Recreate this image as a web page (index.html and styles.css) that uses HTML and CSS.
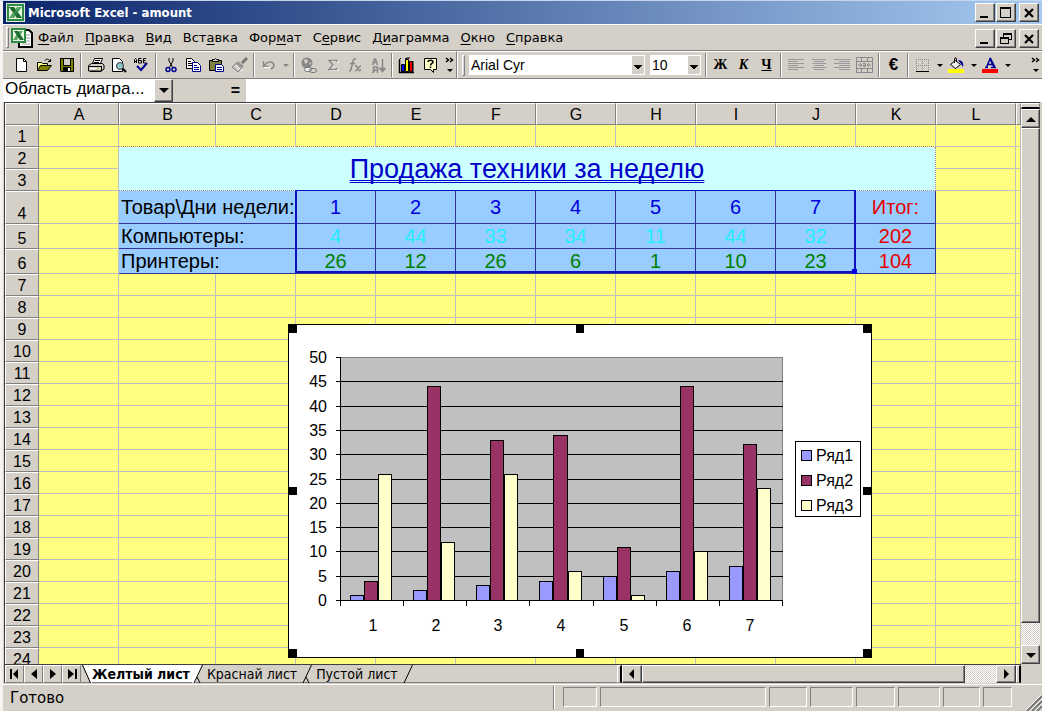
FILE: index.html
```
<!DOCTYPE html>
<html lang="ru">
<head>
<meta charset="utf-8">
<title>Microsoft Excel - amount</title>
<link rel="stylesheet" href="styles.css">
</head>
<body>
<div class="window">
<header class="titlebar">
  <svg class="app-icon" width="19" height="19" viewBox="0 0 19 19"><rect width="19" height="19" fill="#d9ecd6"/><rect x="1" y="1" width="17" height="17" fill="#2f8a44"/><rect x="3" y="3" width="13" height="13" fill="#e8f5e4"/><path d="M3 4h5l8 11h-5z" fill="#1c6b30"/><path d="M11 4h5L8 15H3z" fill="#55a862"/><path d="M3 4h5l8 11h-5z" fill="#1c6b30" opacity=".6"/></svg>
  <h1 class="title">Microsoft Excel - amount</h1>
  <div class="winbtns">
    <button class="wb" aria-label="Свернуть"><svg width="16" height="14"><path d="M3 10h8v2H3z"/></svg></button>
    <button class="wb" aria-label="Развернуть"><svg width="16" height="14"><path d="M2 1h11v11H2zM3 3v8h9V3z" fill-rule="evenodd"/></svg></button>
    <button class="wb wb-close" aria-label="Закрыть"><svg width="16" height="14"><path d="M4 3l8 8M12 3l-8 8" stroke="#000" stroke-width="2.200"/></svg></button>
  </div>
</header>

<nav class="menubar" aria-label="Меню">
  <span class="grip"></span>
  <svg class="doc-icon" width="24" height="22" viewBox="0 0 24 22"><path d="M9 3h10l3 3v14H9z" fill="#fff" stroke="#000" stroke-width="2"/><path d="M13 8h7M13 11h7M13 14h7M12 17h8" stroke="#999"/><rect x="1" y="1" width="15" height="15" fill="#2f8a44"/><rect x="3" y="3" width="11" height="11" fill="#e8f5e4"/><path d="M9 4h4l-6 9H3z" fill="#55a862"/><path d="M4 4h4l6 9h-4z" fill="#1c6b30"/></svg>
  <button class="menu"><u>Ф</u>айл</button>
  <button class="menu"><u>П</u>равка</button>
  <button class="menu"><u>В</u>ид</button>
  <button class="menu">Вст<u>а</u>вка</button>
  <button class="menu">Фор<u>м</u>ат</button>
  <button class="menu">С<u>е</u>рвис</button>
  <button class="menu">Д<u>и</u>аграмма</button>
  <button class="menu"><u>О</u>кно</button>
  <button class="menu"><u>С</u>правка</button>
  <div class="winbtns">
    <button class="wb" aria-label="Свернуть книгу"><svg width="16" height="14"><path d="M3 10h8v2H3z"/></svg></button>
    <button class="wb" aria-label="Восстановить книгу"><svg width="16" height="14"><path d="M5 1h9v7h-3V7h2V3H6v2H5zM2 5h9v7H2zM3 7v4h7V7z" fill-rule="evenodd"/></svg></button>
    <button class="wb wb-close" aria-label="Закрыть книгу"><svg width="16" height="14"><path d="M4 3l8 8M12 3l-8 8" stroke="#000" stroke-width="2.200"/></svg></button>
  </div>
</nav>

<div class="toolbars">
  <div class="bar bar-std">
    <button class="tb" aria-label="Создать"><svg width="16" height="16"><path d="M3.500 1.500h7l3 3v10h-10z" fill="#fff" stroke="#000"/><path d="M10.500 1.500v3h3" fill="none" stroke="#000"/></svg></button>
    <button class="tb" aria-label="Открыть"><svg width="16" height="16"><path d="M1.500 13.500v-8h4l1 1h5v2" fill="#ffff80" stroke="#000"/><path d="M1.500 13.500l3-5h11l-4 5z" fill="#808000" stroke="#000"/><path d="M9 3.500c1-2 4-2 5 1M12 4.500h3M14.500 2v3" fill="none" stroke="#000"/></svg></button>
    <button class="tb" aria-label="Сохранить"><svg width="16" height="16"><path d="M1 1h14v14H2l-1-1z"/><path d="M2 2h2v7h8V2h2v12H2z" fill="#808000"/><path d="M5 2h6v6H5z" fill="#d4d0c8"/><path d="M4 10h8v4H4z"/><path d="M9 11h2v3H9z" fill="#fff"/></svg></button>
    <span class="sep"></span>
    <button class="tb" aria-label="Печать"><svg width="18" height="16"><path d="M5.500 6.500l2-5h8l-2 5" fill="#fff" stroke="#000"/><path d="M8 3.500h5M7 5.500h5" stroke="#000"/><path d="M1.500 8.500l3-2h11l1.500 1.500v4l-2.500 2h-13z" fill="#d4d0c8" stroke="#000"/><path d="M2 9.500h13M14.500 9v5M3 14.500h11" stroke="#000"/><path d="M3 11.500h10" stroke="#fff"/><path d="M10 11h2v1h-2z" fill="#cc0"/></svg></button>
    <button class="tb" aria-label="Предварительный просмотр"><svg width="17" height="16"><path d="M2.500 14.500v-13h7l3 3v10z" fill="#fff" stroke="#000"/><circle cx="10" cy="9" r="3.500" fill="#8ec8c8" stroke="#333"/><path d="M12.500 11.500l3.500 3.500" stroke="#000" stroke-width="2"/></svg></button>
    <button class="tb" aria-label="Орфография"><svg width="18" height="16"><path d="M1.500 6V2.500l1-1 1 1V6M1.500 4.500h2M8.500 1.500h-3V6h3V3.500h-3M13 1.500h-2.500V6H13M10 3.500h2.500" fill="none" stroke="#000"/><path d="M4 9l4 4 6-7" fill="none" stroke="#000090" stroke-width="2"/></svg></button>
    <span class="sep"></span>
    <button class="tb" aria-label="Вырезать"><svg width="16" height="16"><path d="M6 1v3l4 7M10 1v3L6 11" fill="none" stroke="#000"/><circle cx="5" cy="12.500" r="2" fill="none" stroke="#000090" stroke-width="1.500"/><circle cx="11" cy="12.500" r="2" fill="none" stroke="#000090" stroke-width="1.500"/></svg></button>
    <button class="tb" aria-label="Копировать"><svg width="17" height="16"><path d="M1.500 1.500h5l3 3v7h-8z" fill="#fff" stroke="#000"/><path d="M3 4.500h3M3 6.500h4M3 8.500h4" stroke="#000"/><path d="M7.500 5.500h5l3 3v6h-8z" fill="#fff" stroke="#000090"/><path d="M9 8.500h3M9 10.500h5M9 12.500h5" stroke="#000090"/></svg></button>
    <button class="tb" aria-label="Вставить"><svg width="17" height="16"><path d="M1.500 3.500h12v10h-12z" fill="#808040" stroke="#000"/><path d="M4.500 4.500v-2h2l1-1 1 1h2v2z" fill="#d4d0c8" stroke="#000"/><path d="M7.500 7.500h6l2 2v5h-8z" fill="#fff" stroke="#000090"/><path d="M9 10.500h5M9 12.500h5" stroke="#000090"/></svg></button>
    <button class="tb" aria-label="Формат по образцу"><svg width="17" height="16"><path d="M16 1l-5 5" stroke="#777" stroke-width="3"/><path d="M7 4l6 5-2 2-6-5z" fill="#999"/><path d="M5 6l6 5-4 4-6-5z" fill="#b8b5ae" stroke="#888"/><path d="M3 9l5 4M5 8l4 4M9 14l3-2" stroke="#fff"/></svg></button>
    <span class="sep"></span>
    <button class="tb" aria-label="Отменить"><svg width="16" height="16"><path d="M2.500 4v6M2 9.500h6M3 9c3-5 9-5 10-1 0 2-1 3-3 4" fill="none" stroke="#888" stroke-width="1.500"/><path d="M3 10.500h6" stroke="#fff"/></svg></button>
    <button class="dd dd-off" aria-label="Список отмены"></button>
    <span class="sep"></span>
    <button class="tb" aria-label="Гиперссылка"><svg width="17" height="17"><circle cx="7" cy="6" r="5.500" fill="#888"/><path d="M4 3l3-1 1 3-3 2zM9 6l2-1v3z" fill="#d4d0c8"/><rect x="4.500" y="10.500" width="7" height="4" rx="2" fill="#eee" stroke="#777"/><rect x="9.500" y="11.500" width="7" height="4" rx="2" fill="none" stroke="#777"/></svg></button>
    <button class="tb" aria-label="Автосумма"><svg width="16" height="16"><path d="M13 5V3.500H5L9 8 5 12.500h8V11" fill="none" stroke="#fff" transform="translate(1 1)"/><path d="M12.500 5V3.500H5L9 8 5 12.500h7.500V11" fill="none" stroke="#888" stroke-width="1.500"/></svg></button>
    <button class="tb" aria-label="Вставка функции"><svg width="16" height="16"><path d="M9 2c-2-1-3 1-3 3l-2 7c0 2-1 2-2 2M3 6.500h5M8 9c2-1 2 1 3 3s1 2 3 1M14 9c-2 0-4 5-6 5" fill="none" stroke="#888" stroke-width="1.500"/></svg></button>
    <button class="tb" aria-label="Сортировка"><svg width="16" height="17"><path d="M2.500 8l2-6h1l2 6M3 5.500h4M7.500 16v-6h-4v3h4M5 13l-2.500 3M12.500 2v12M10 11.500l2.500 3 2.500-3z" fill="none" stroke="#888" stroke-width="1.500"/></svg></button>
    <span class="sep"></span>
    <button class="tb" aria-label="Мастер диаграмм"><svg width="18" height="17"><path d="M1.500 3v12.500H16" fill="none" stroke="#000" stroke-width="1.500"/><path d="M3.500 7.500h3v7h-3z" fill="#00f" stroke="#000"/><path d="M7.500 2.500h3v12h-3z" fill="#ff0" stroke="#000"/><path d="M11.500 4.500h3v10h-3z" fill="#e00" stroke="#000"/><path d="M1 3l2-2M7 2l2-1h3M15 4v11" stroke="#000"/></svg></button>
    <button class="tb" aria-label="Справка"><svg width="16" height="17"><path d="M2.500 1.500h12v11h-3v3l-3-3h-6z" fill="#ffffc8" stroke="#000"/><path d="M6 5c0-2.500 5-2.500 5 0 0 1.500-2.500 1.500-2.500 3.500M8.500 9.500v1.500" fill="none" stroke="#000" stroke-width="1.500"/></svg></button>
    <button class="more" aria-label="Другие кнопки"><svg width="10" height="16"><path d="M1 1l2.500 2L1 5M5 1l2.500 2L5 5" fill="none" stroke="#000" stroke-width="1.500"/><path d="M2 12h6l-3 3z"/></svg></button>
  </div>
  <div class="bar bar-fmt">
    <span class="grip grip-tall"></span>
    <span class="combo combo-font"><select aria-label="Шрифт"><option>Arial Cyr</option></select></span>
    <span class="combo combo-size"><select aria-label="Размер"><option>10</option></select></span>
    <span class="sep"></span>
    <button class="tb fmt-b">Ж</button>
    <button class="tb fmt-i">К</button>
    <button class="tb fmt-u">Ч</button>
    <span class="sep"></span>
    <button class="tb" aria-label="По левому краю"><svg width="16" height="16"><path d="M0 2.500h16M0 4.500h10M0 6.500h16M0 8.500h10M0 10.500h16M0 12.500h10" stroke="#999"/></svg></button>
    <button class="tb" aria-label="По центру"><svg width="16" height="16"><path d="M1 2.500h14M3 4.500h10M1 6.500h14M3 8.500h10M1 10.500h14M3 12.500h10" stroke="#999"/></svg></button>
    <button class="tb" aria-label="По правому краю"><svg width="16" height="16"><path d="M0 2.500h16M5 4.500h11M0 6.500h16M5 8.500h11M0 10.500h16M5 12.500h11" stroke="#999"/></svg></button>
    <button class="tb" aria-label="Объединить ячейки"><svg width="17" height="17"><path d="M.5.500h16v15H.5zM0 4.500h16M0 11.500h16M5.500 0v4M11.500 0v4M5.500 12v4M11.500 12v4" fill="none" stroke="#888"/><path d="M2 8h3M12 8h3M4 6l2 2-2 2M13 6l-2 2 2 2" fill="none" stroke="#888"/><path d="M7 6.500h2.500v3H7.500v-1.500h2" fill="none" stroke="#888"/></svg></button>
    <span class="sep"></span>
    <button class="tb fmt-e">€</button>
    <span class="sep"></span>
    <button class="tb" aria-label="Границы"><svg width="15" height="15"><path d="M1 1.500h13M1 7.500h13M1.500 1v12M7.500 1v12M13.500 1v12" stroke="#888" stroke-dasharray="1 1"/><path d="M1 13.500h13" stroke="#000"/></svg></button>
    <button class="dd" aria-label="Вид границ"></button>
    <button class="tb" aria-label="Цвет заливки"><svg width="17" height="17"><path d="M7.500 3.500l5 4-5 4-5-4z" fill="#eee" stroke="#000"/><path d="M6.500 6V2c0-1.500 2-1.500 2 0v3" fill="none" stroke="#000"/><path d="M10 3c5 0 6 4 5 7l-2-3z" fill="#000090"/><path d="M0 12h16v4H0z" fill="#ff0"/></svg></button>
    <button class="dd" aria-label="Выбор цвета заливки"></button>
    <button class="tb" aria-label="Цвет шрифта"><svg width="17" height="17"><path d="M3 10.500h3M9 10.500h5M4.500 10L8 2l4 8M6 7.500h5" fill="none" stroke="#000090" stroke-width="1.500"/><path d="M8 1l4.500 9" stroke="#000090" stroke-width="2"/><path d="M0 12h16v4H0z" fill="#f00"/></svg></button>
    <button class="dd" aria-label="Выбор цвета шрифта"></button>
    <button class="more more-end" aria-label="Другие кнопки"><svg width="10" height="16"><path d="M1 1l2.500 2L1 5M5 1l2.500 2L5 5" fill="none" stroke="#000" stroke-width="1.500"/><path d="M2 12h6l-3 3z"/></svg></button>
  </div>
</div>

<div class="formula">
  <input class="namebox" type="text" aria-label="Имя" value="Область диагра...">
  <button class="name-dd" aria-label="Список имён"></button>
  <button class="eq" aria-label="Изменить формулу">=</button>
  <input class="fx" type="text" aria-label="Строка формул">
</div>

<main class="work">
  <div class="pane">
    <div class="grid">
    <table class="sheet">
      <colgroup><col class="c-head"><col class="c"><col class="c-b"><col class="c"><col class="c"><col class="c"><col class="c"><col class="c"><col class="c"><col class="c"><col class="c"><col class="c"><col class="c"><col></colgroup>
      <thead>
      <tr><th></th><th>A</th><th>B</th><th>C</th><th>D</th><th>E</th><th>F</th><th>G</th><th>H</th><th>I</th><th>J</th><th>K</th><th>L</th><th></th></tr>
      </thead>
      <tbody>
      <tr class="above"><th>1</th><td><td><td><td><td><td><td><td><td><td><td><td><td></tr>
      <tr><th>2</th><td><td class="caption" colspan="10" rowspan="2">Продажа техники за неделю<td><td></tr>
      <tr><th>3</th><td><td><td></tr>
      <tr class="data tall"><th>4</th><td><td class="name" colspan="2">Товар\Дни недели:<td class="day">1<td class="day">2<td class="day">3<td class="day">4<td class="day">5<td class="day">6<td class="day">7<td class="sum">Итог:<td><td></tr>
      <tr class="data mid"><th>5</th><td><td class="name" colspan="2">Компьютеры:<td class="pc">4<td class="pc">44<td class="pc">33<td class="pc">34<td class="pc">11<td class="pc">44<td class="pc">32<td class="sum">202<td><td></tr>
      <tr class="data mid"><th>6</th><td><td class="name" colspan="2">Принтеры:<td class="prn">26<td class="prn">12<td class="prn">26<td class="prn">6<td class="prn">1<td class="prn">10<td class="prn">23<td class="sum">104<td><td></tr>
      <tr><th>7</th><td><td><td><td><td><td><td><td><td><td><td><td><td></tr>
      <tr><th>8</th><td><td><td><td><td><td><td><td><td><td><td><td><td></tr>
      <tr><th>9</th><td><td><td><td><td><td><td><td><td><td><td><td><td></tr>
      <tr><th>10</th><td><td><td><td><td><td><td><td><td><td><td><td><td></tr>
      <tr><th>11</th><td><td><td><td><td><td><td><td><td><td><td><td><td></tr>
      <tr><th>12</th><td><td><td><td><td><td><td><td><td><td><td><td><td></tr>
      <tr><th>13</th><td><td><td><td><td><td><td><td><td><td><td><td><td></tr>
      <tr><th>14</th><td><td><td><td><td><td><td><td><td><td><td><td><td></tr>
      <tr><th>15</th><td><td><td><td><td><td><td><td><td><td><td><td><td></tr>
      <tr><th>16</th><td><td><td><td><td><td><td><td><td><td><td><td><td></tr>
      <tr><th>17</th><td><td><td><td><td><td><td><td><td><td><td><td><td></tr>
      <tr><th>18</th><td><td><td><td><td><td><td><td><td><td><td><td><td></tr>
      <tr><th>19</th><td><td><td><td><td><td><td><td><td><td><td><td><td></tr>
      <tr><th>20</th><td><td><td><td><td><td><td><td><td><td><td><td><td></tr>
      <tr><th>21</th><td><td><td><td><td><td><td><td><td><td><td><td><td></tr>
      <tr><th>22</th><td><td><td><td><td><td><td><td><td><td><td><td><td></tr>
      <tr><th>23</th><td><td><td><td><td><td><td><td><td><td><td><td><td></tr>
      <tr><th>24</th><td><td><td><td><td><td><td><td><td><td><td><td><td></tr>
      </tbody>
    </table>
    <div class="range"></div>
    <svg class="chart" viewBox="288 324 584 334" role="img" aria-label="Диаграмма">
      <g transform="translate(.5 .5)" fill="none" stroke="#000" shape-rendering="crispEdges">
        <rect x="288" y="324" width="583" height="333" fill="#fff"/>
        <rect x="340" y="357" width="442" height="243" fill="#c0c0c0" stroke="#808080"/>
        <path d="M340 381h442M340 406h442M340 430h442M340 454h442M340 479h442M340 503h442M340 527h442M340 551h442M340 576h442"/>
        <path d="M340 357v248M335 600h447M335 357h5M335 381h5M335 406h5M335 430h5M335 454h5M335 479h5M335 503h5M335 527h5M335 551h5M335 576h5"/>
        <path d="M403 600v5M466 600v5M529 600v5M593 600v5M656 600v5M719 600v5M782 600v5"/>
        <g fill="#9999ff">
          <rect x="350" y="595" width="13" height="5"/><rect x="413" y="590" width="13" height="10"/><rect x="476" y="585" width="13" height="15"/><rect x="539" y="581" width="13" height="19"/><rect x="603" y="576" width="13" height="24"/><rect x="666" y="571" width="13" height="29"/><rect x="729" y="566" width="13" height="34"/>
        </g>
        <g fill="#993366">
          <rect x="364" y="581" width="13" height="19"/><rect x="427" y="386" width="13" height="214"/><rect x="490" y="440" width="13" height="160"/><rect x="553" y="435" width="14" height="165"/><rect x="617" y="547" width="13" height="53"/><rect x="680" y="386" width="13" height="214"/><rect x="743" y="444" width="13" height="156"/>
        </g>
        <g fill="#ffffcc">
          <rect x="378" y="474" width="13" height="126"/><rect x="441" y="542" width="13" height="58"/><rect x="504" y="474" width="13" height="126"/><rect x="568" y="571" width="13" height="29"/><rect x="631" y="595" width="13" height="5"/><rect x="694" y="551" width="13" height="49"/><rect x="757" y="488" width="13" height="112"/>
        </g>
        <rect x="795" y="441" width="65" height="75" fill="#fff"/>
        <rect x="801" y="450" width="10" height="10" fill="#9999ff"/>
        <rect x="801" y="475" width="10" height="10" fill="#993366"/>
        <rect x="801" y="500" width="10" height="10" fill="#ffffcc"/>
      </g>
      <g class="axis-y"><text x="327" y="363">50</text><text x="327" y="387">45</text><text x="327" y="412">40</text><text x="327" y="436">35</text><text x="327" y="460">30</text><text x="327" y="485">25</text><text x="327" y="509">20</text><text x="327" y="533">15</text><text x="327" y="557">10</text><text x="327" y="582">5</text><text x="327" y="606">0</text></g>
      <g class="axis-x"><text x="373" y="631">1</text><text x="436" y="631">2</text><text x="498" y="631">3</text><text x="561" y="631">4</text><text x="624" y="631">5</text><text x="687" y="631">6</text><text x="750" y="631">7</text></g>
      <text x="816" y="461">Ряд1</text><text x="816" y="486">Ряд2</text><text x="816" y="511">Ряд3</text>
      <path d="M288 324h9v9h-9zM576 324h8v9h-8zM863 324h9v9h-9zM288 487h9v8h-9zM863 487h9v8h-9zM288 649h9v9h-9zM576 649h8v9h-8zM863 649h9v9h-9z"/>
    </svg>
    </div>
    <div class="foot">
      <div class="tabnav">
        <button class="nv" aria-label="Первый лист"><svg width="12" height="12"><path d="M1 1h2v10H1zM9 1v10L4 6z"/></svg></button>
        <button class="nv" aria-label="Предыдущий лист"><svg width="12" height="12"><path d="M9 1v10L3 6z"/></svg></button>
        <button class="nv" aria-label="Следующий лист"><svg width="12" height="12"><path d="M3 1v10l6-5z"/></svg></button>
        <button class="nv" aria-label="Последний лист"><svg width="12" height="12"><path d="M2 1v10l6-5zM9 1h2v10H9z"/></svg></button>
      </div>
      <div class="tabs">
        <svg width="11" height="18"><path d="M2 0h9v18H10z" fill="#fff"/><path d="M1.500 0l8 18" stroke="#000"/></svg>
        <button class="tab tab-on">Желтый лист</button>
        <svg width="11" height="18"><path d="M0 0h10L3 18H0z" fill="#fff"/><path d="M10.500 0L2 18M5 12l3 6" stroke="#000"/></svg>
        <button class="tab">Краснай лист</button>
        <svg width="11" height="18"><path d="M10.500 0L2 18M5 12l3 6" stroke="#000"/></svg>
        <button class="tab">Пустой лист</button>
        <svg width="11" height="18"><path d="M10.500 0L2 18" stroke="#000"/></svg>
      </div>
      <div class="hscroll">
        <span class="split-v"></span>
        <button class="sb" aria-label="Влево"><svg width="12" height="12"><path d="M8 1v10L3 6z"/></svg></button>
        <span class="thumb"></span>
        <span class="track-h"></span>
        <button class="sb" aria-label="Вправо"><svg width="12" height="12"><path d="M4 1v10l5-5z"/></svg></button>
        <span class="split-v"></span>
      </div>
    </div>
  </div>
  <div class="vscroll">
    <span class="split-h"></span>
    <button class="sb sb-v" aria-label="Вверх"><svg width="12" height="12"><path d="M1 9h10L6 4z"/></svg></button>
    <span class="thumb"></span>
    <span class="track-v"></span>
    <button class="sb sb-v" aria-label="Вниз"><svg width="12" height="12"><path d="M1 4h10L6 9z"/></svg></button>
    <span class="corner"></span>
  </div>
</main>

<footer class="status">
  <span class="ready">Готово</span>
  <span class="cells"><i class="p p1"></i><i class="p p2"></i><i class="p p3"></i><i class="p p4"></i><i class="p p5"></i><i class="p p6"></i><i class="p p7"></i><i class="p p8"></i></span>
  <svg class="resize" width="16" height="16"><path d="M1 16L16 1M6 16L16 6M11 16l5-5" stroke="#777" stroke-width="2"/><path d="M0 15L15 0M5 15L16 4M10 15l6-6" stroke="#fff"/></svg>
</footer>
</div>
</body>
</html>
```
FILE: styles.css
```
* { box-sizing: border-box; }
body { margin: 0; background: #d4d0c8; font-family: "Liberation Sans", Arial, sans-serif; color: #000; }
button { border: 0; margin: 0; padding: 0; background: none; color: inherit; font: inherit; }
svg { display: block; }

.window { display: flex; flex-direction: column; height: 100vh; border-left: 3px solid #f4f3f0; border-top: 1px solid #c4d6ec; overflow: hidden; background: #d4d0c8; }

.titlebar { display: flex; align-items: center; height: 23px; padding: 0 3px; background: linear-gradient(90deg, #0a246a, #a6caf0); flex: none; }
.title { margin: 0; padding-left: 3px; color: #fff; font: bold 13px/20px "DejaVu Sans Condensed", "DejaVu Sans", sans-serif; }
.winbtns { display: flex; margin-left: auto; }
.wb { width: 20px; height: 19px; display: flex; align-items: center; justify-content: center; background: #d4d0c8; border: 1px solid; border-color: #fff #404040 #404040 #fff; box-shadow: inset -1px -1px #808080; }
.wb + .wb { margin-left: 1px; }
.wb + .wb-close { margin-left: 3px; }

.menubar { display: flex; align-items: center; gap: 1px; height: 27px; padding: 0 3px; border-top: 1px solid #fff; border-bottom: 1px solid #808080; flex: none; }
.menubar .winbtns { align-self: flex-end; padding-bottom: 2px; }
.grip { width: 3px; height: 21px; border: 1px solid; border-color: #fff #808080 #808080 #fff; }
.doc-icon { margin-right: -2px; }
.menu { padding: 0 5px; font: 13px/20px "DejaVu Sans", sans-serif; }
.menu u { text-underline-offset: 2px; }

.toolbars { display: flex; height: 28px; flex: none; }
.bar { display: flex; align-items: center; border-top: 1px solid #fff; border-bottom: 1px solid #808080; }
.bar-std { padding-left: 6px; border-right: 1px solid #808080; }
.bar-fmt { flex: 1; padding-left: 4px; border-left: 1px solid #fff; }
.tb { width: 23px; height: 22px; display: flex; align-items: center; justify-content: center; flex: none; }
.sep { width: 2px; height: 24px; margin: 0 2px; background: #808080; border-right: 1px solid #fff; flex: none; }
.dd { width: 11px; height: 22px; flex: none; display: flex; align-items: center; justify-content: center; }
.dd::before { content: ""; border: 3px solid transparent; border-top-color: #000; border-bottom: 0; }
.dd-off::before { border-top-color: #888; }
.more { width: 15px; padding-left: 4px; }
.more-end { margin-left: auto; margin-right: 2px; width: 13px; }
.grip-tall { margin-right: 4px; }
.combo { position: relative; height: 20px; background: #fff; display: flex; }
.combo::after { content: ""; position: absolute; right: 1px; top: 1px; width: 12px; height: 18px; pointer-events: none; background: linear-gradient(#000, #000) 50% 50% / 8px 1px no-repeat, linear-gradient(#000, #000) 50% 56% / 6px 1px no-repeat, linear-gradient(#000, #000) 50% 62% / 4px 1px no-repeat, linear-gradient(#000, #000) 50% 68% / 2px 1px no-repeat, #d4d0c8; }
.combo select { appearance: none; width: 100%; border: 0; padding: 0 14px 0 2px; background: none; font: 14px/18px "Liberation Sans", Arial, sans-serif; color: #000; }
.combo-font { width: 176px; margin-right: 5px; }
.combo-size { width: 51px; margin-right: 2px; }
.fmt-b, .fmt-i, .fmt-u { font: bold 14px/20px "Liberation Serif", serif; }
.fmt-i { font-style: italic; }
.fmt-u { text-decoration: underline; }
.fmt-e { font: bold 17px/20px "Liberation Sans", Arial, sans-serif; }

.formula { display: flex; height: 23px; flex: none; }
.formula input { border: 0; margin: 0; padding: 0 2px; background: #fff; font: 17px/20px "Liberation Sans", Arial, sans-serif; color: #000; outline: 0; }
.formula .namebox { width: 151px; padding: 0 0 3px 2px; }
.name-dd { width: 19px; border: 1px solid; border-color: #fff #404040 #404040 #fff; box-shadow: inset -1px -1px #808080; background: #d4d0c8; display: flex; align-items: center; justify-content: center; }
.name-dd::before { content: ""; border: 5px solid transparent; border-top-color: #000; border-bottom: 0; }
.eq { width: 73px; padding-right: 6px; text-align: right; font-weight: bold; font-size: 16px; line-height: 20px; }
.formula .fx { flex: 1; }

.work { flex: 1; min-height: 0; display: flex; margin: 0 2px 0 1px; border-left: 1px solid #404040; }
.pane { flex: 1; min-width: 0; display: flex; flex-direction: column; }
.grid { position: relative; flex: 1; min-height: 0; overflow: hidden; background: #ffff80; border-top: 1px solid #404040; }
.sheet { width: 100%; table-layout: fixed; border-collapse: separate; border-spacing: 0; }
.c-head { width: 34px; }
.c { width: 80px; }
.c-b { width: 97px; }
.sheet tr { height: 22px; }
.sheet th { padding: 0; height: 22px; background: #d4d0c8; border: 1px solid; border-color: #fff #808080 #808080 #fff; font-weight: normal; font-size: 16px; line-height: 18px; vertical-align: bottom; }
.sheet td { padding: 0; border: 0 solid #c0c0c0; border-right-width: 1px; border-bottom-width: 1px; font-size: 20px; line-height: 24px; text-align: center; }
.above td:nth-child(n+3):nth-child(-n+12) { border-bottom: 1px dotted #c08070; }
.sheet .caption { background: #ccffff; color: #0000c8; font-size: 27px; line-height: 32px; text-decoration: underline double 1px; text-underline-offset: 2px; text-decoration-skip-ink: none; border-right: 1px dotted #c08070; border-bottom: 1px dotted #c08070; }
.sheet .tall { height: 33px; }
.sheet .mid { height: 25px; }
.data .name, .data .day, .data .pc, .data .prn, .data .sum { background: #99ccff; border-color: #333399; }
.data .name { text-align: left; padding-left: 2px; white-space: nowrap; }
.data .day { color: #0000dd; }
.data .pc { color: #22eeff; }
.data .prn { color: #008000; }
.data .sum { color: #e60000; }
.range { position: absolute; left: 290px; top: 87px; width: 561px; height: 83px; border: 2px solid #1010c0; border-top-width: 1px; }
.range::after { content: ""; position: absolute; right: -3px; bottom: -3px; width: 5px; height: 5px; background: #0000dd; }
.chart { position: absolute; left: 283px; top: 221px; width: 584px; height: 334px; font-size: 16px; }
.axis-y { text-anchor: end; }
.axis-x { text-anchor: middle; }

.foot { display: flex; height: 19px; flex: none; border-top: 1px solid #404040; }
.tabnav { display: flex; }
.nv { width: 19px; height: 18px; display: flex; align-items: center; justify-content: center; border: 1px solid; border-color: #fff #808080 #808080 #fff; }
.tabs { display: flex; flex: 1; border-bottom: 1px solid #808080; }
.tab { padding: 0 4px; font: 14px/18px "DejaVu Sans Condensed", "DejaVu Sans", sans-serif; white-space: nowrap; }
.tab-on { padding: 0 2px 0 0; background: #fff; font-weight: bold; }
.hscroll { display: flex; width: 404px; }
.split-v { width: 5px; border: 1px solid; border-color: #fff #000 #808080 #fff; border-right-width: 2px; flex: none; }
.sb { width: 20px; flex: none; display: flex; align-items: center; justify-content: center; background: #d4d0c8; border: 1px solid; border-color: #fff #404040 #404040 #fff; box-shadow: inset -1px -1px #808080; }
.thumb { flex: 1; background: #d4d0c8; border: 1px solid; border-color: #fff #404040 #404040 #fff; box-shadow: inset -1px -1px #808080; }
.track-h { width: 31px; background: repeating-conic-gradient(#fff 0 25%, #d4d0c8 0 50%) 0 0 / 2px 2px; }
.vscroll { width: 19px; display: flex; flex-direction: column; border-top: 1px solid #404040; }
.split-h { height: 6px; border: 1px solid; border-color: #fff #808080 #000 #fff; border-bottom-width: 2px; }
.sb-v { width: 19px; height: 19px; }
.track-v { height: 22px; background: repeating-conic-gradient(#fff 0 25%, #d4d0c8 0 50%) 0 0 / 2px 2px; }
.corner { height: 19px; }

.status { display: flex; align-items: center; height: 27px; flex: none; border-top: 1px solid #fff; margin-top: 1px; }
.ready { flex: 1; padding-left: 7px; font: 15px/20px "DejaVu Sans", sans-serif; }
.cells { display: flex; gap: 3px; height: 24px; padding: 1px 0 1px 9px; border-left: 1px solid #808080; box-shadow: inset 1px 0 #fff; }
.p { height: 20px; border: 1px solid; border-color: #808080 #fff #fff #808080; }
.p1 { width: 34px; }
.p2 { width: 166px; }
.p3 { width: 38px; }
.p4 { width: 43px; }
.p5 { width: 39px; }
.p6 { width: 42px; }
.p7 { width: 37px; }
.p8 { width: 29px; }
.resize { margin-left: 14px; align-self: flex-end; }
```
